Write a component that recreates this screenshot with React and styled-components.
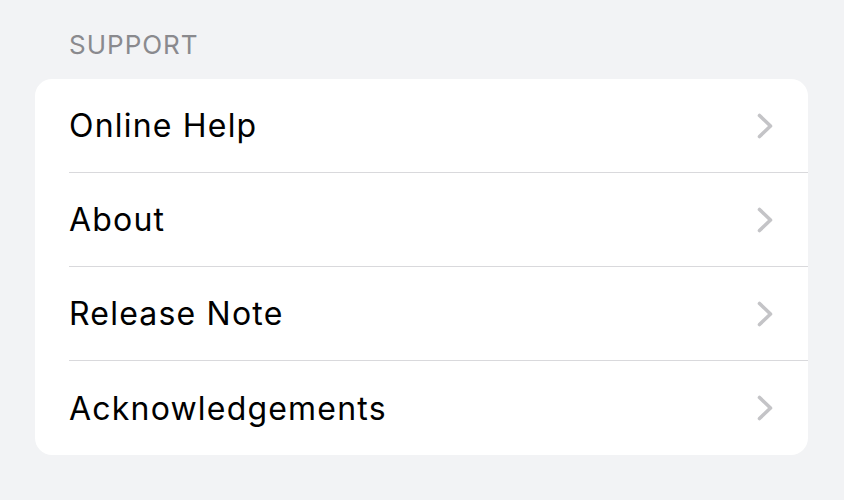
import React from "react";
import styled, { createGlobalStyle } from "styled-components";

const Global = createGlobalStyle`
  html, body { margin: 0; padding: 0; background: #f2f3f5; }
  body { font-family: Inter, "Noto Sans", "Liberation Sans", sans-serif; -webkit-font-smoothing: antialiased; }
`;

const Page = styled.div`
  width: 844px;
  height: 500px;
  box-sizing: border-box;
  padding: 29px 36px 0 35px;
  background: #f2f3f5;
`;

const SectionHeader = styled.div`
  padding-left: 34px;
  font-size: 26px;
  line-height: 32px;
  color: #8a8a8e;
  letter-spacing: 1px;
  text-transform: uppercase;
  margin-bottom: 18px;
`;

const Card = styled.div`
  background: #ffffff;
  border-radius: 17px;
  overflow: hidden;
`;

const Row = styled.div`
  display: flex;
  align-items: center;
  box-sizing: border-box;
  height: 94px;
  margin-left: 34px;
  padding-right: 34px;
  border-bottom: ${(p) => (p.$last ? "none" : "1px solid #d9d9dc")};
`;

const Label = styled.span`
  flex: 1;
  font-size: 32px;
  color: #000;
  letter-spacing: 1.2px;
`;

const Chevron = () => (
  <svg width="18" height="26" viewBox="0 0 18 26">
    <path d="M3.5 2.5 L14.5 13 L3.5 23.5" fill="none" stroke="#c4c4c7" strokeWidth="3.6" strokeLinecap="round" strokeLinejoin="round" />
  </svg>
);

const items = ["Online Help", "About", "Release Note", "Acknowledgements"];

export default function App() {
  return (
    <Page>
      <Global />
      <SectionHeader>Support</SectionHeader>
      <Card>
        {items.map((t, i) => (
          <Row key={t} $last={i === items.length - 1}>
            <Label>{t}</Label>
            <Chevron />
          </Row>
        ))}
      </Card>
    </Page>
  );
}
